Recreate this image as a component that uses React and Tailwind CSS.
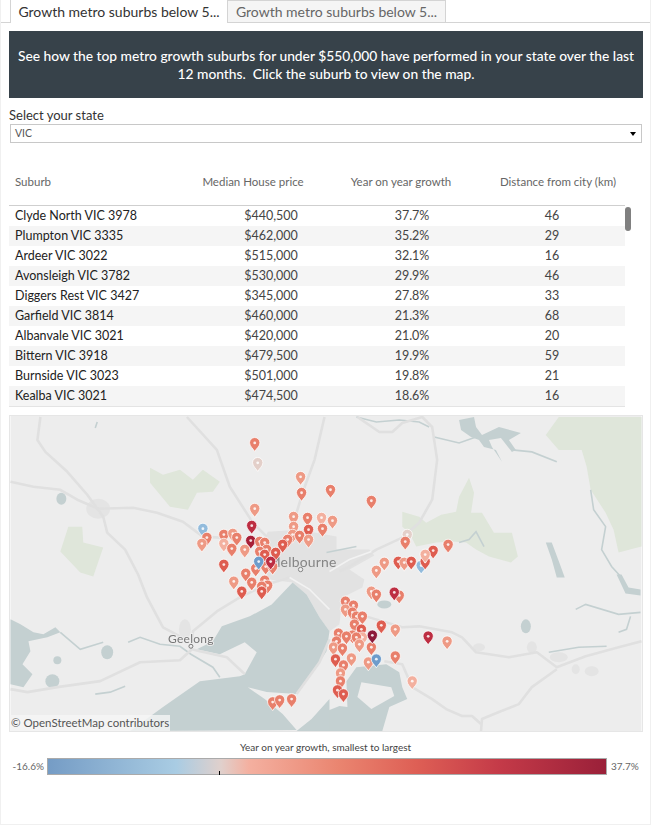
import { Fragment } from 'react'

const rows = [
  ['Clyde North VIC 3978', '$440,500', '37.7%', '46'],
  ['Plumpton VIC 3335', '$462,000', '35.2%', '29'],
  ['Ardeer VIC 3022', '$515,000', '32.1%', '16'],
  ['Avonsleigh VIC 3782', '$530,000', '29.9%', '46'],
  ['Diggers Rest VIC 3427', '$345,000', '27.8%', '33'],
  ['Garfield VIC 3814', '$460,000', '21.3%', '68'],
  ['Albanvale VIC 3021', '$420,000', '21.0%', '20'],
  ['Bittern VIC 3918', '$479,500', '19.9%', '59'],
  ['Burnside VIC 3023', '$501,000', '19.8%', '21'],
  ['Kealba VIC 3021', '$474,500', '18.6%', '16'],
]

const blue = '#6d9ccb'
const lblue = '#92bbdc'
const pale = '#e3cfc9'
const light = '#f3b09f'
const sal = '#ee9a85'
const mid = '#e87f6b'
const red = '#de5d50'
const crim = '#bd2e42'
const dark = '#a82038'
const maroon = '#8c1a3a'

const pins = [
  [255, 443, mid], [258, 463, pale], [301, 477, sal], [302, 493, mid], [331, 490, mid], [372, 501, mid],
  [255, 509, sal], [252, 526, crim], [251, 541, dark], [203, 529, lblue], [207, 538, mid], [202, 544, sal],
  [224, 535, mid], [224, 544, light], [233, 534, sal], [237, 538, mid], [232, 549, mid], [245, 550, sal],
  [294, 517, sal], [308, 518, mid], [322, 518, light], [333, 521, sal], [294, 527, sal], [309, 530, red],
  [323, 529, mid], [293, 535, sal], [300, 536, mid], [288, 540, mid], [283, 545, red], [309, 540, sal],
  [260, 542, mid], [265, 543, mid], [267, 550, mid], [260, 552, mid], [265, 555, red], [276, 553, red],
  [224, 565, red], [256, 569, mid], [266, 567, mid], [273, 567, mid], [259, 562, blue], [271, 562, crim],
  [246, 574, mid], [234, 582, sal], [252, 583, mid], [242, 592, red], [265, 581, mid], [268, 586, mid],
  [262, 587, mid], [262, 592, red], [273, 703, mid], [280, 701, mid], [292, 700, mid],
  [408, 535, pale], [406, 542, mid], [449, 545, mid], [422, 566, lblue], [426, 562, red], [434, 551, red],
  [426, 555, light], [399, 562, red], [405, 563, sal], [412, 562, red], [385, 563, sal], [377, 571, sal],
  [372, 592, sal], [377, 595, mid], [400, 596, mid], [395, 593, crim],
  [346, 602, mid], [354, 606, mid], [346, 610, sal], [353, 613, mid], [357, 617, mid], [363, 617, mid],
  [355, 625, mid], [362, 630, red], [363, 638, light], [382, 626, red], [396, 630, sal], [429, 637, crim],
  [448, 642, sal], [339, 634, mid], [353, 636, mid], [347, 637, mid], [357, 638, mid], [337, 642, mid],
  [360, 645, sal], [334, 648, sal], [343, 649, mid], [372, 648, mid], [373, 636, maroon], [336, 660, red],
  [352, 659, sal], [344, 666, mid], [369, 663, sal], [377, 660, blue], [396, 657, mid], [341, 674, sal],
  [341, 682, mid], [338, 691, red], [344, 695, red], [413, 682, light],
]

const roads = [
  '10,482 33,487 60,490 77,500 98,509 133,508 157,513 183,522 203,537 220,538',
  '40,417 37,440 45,452 67,472 87,495 103,517 107,533 125,550 138,575 147,598 163,628 180,637',
  '187,417 217,450 230,487 253,523 267,537',
  '325,417 315,460 303,493 297,513',
  '358,417 380,432 393,432 403,423 423,417 433,427 438,460 433,500 420,523 403,538 377,550 350,567 340,572',
  '10,690 27,693 57,688 100,682 140,663 180,661 192,650 200,652 227,658 245,675',
  '192,645 193,632 217,612 240,598 267,585 290,578',
  '345,610 370,618 403,628 420,627 453,633 463,638 477,653 510,658 538,653 558,668 587,657 620,648 643,642',
  '558,670 533,688 520,705 500,713 483,720 482,732',
  '385,662 403,665 413,688 433,700 447,710 463,717 473,717 482,725',
  '297,695 320,663 330,640',
]

const streams = [
  '60,633 80,650 103,643',
  '128,643 140,638 160,645 180,647 191,655 213,668 220,678',
  '95,695 110,693 125,687',
  '357,417 377,422 400,420 420,422 430,427',
  '435,437 460,443 477,437',
  '513,450 533,452 558,462',
  '592,490 595,510 607,527 603,550 613,567 623,578',
  '460,543 470,540 477,532 485,547',
  '327,553 357,547',
  '577,610 587,605 620,615 642,613',
  '632,617 628,630 620,633',
  '550,653 580,648 608,647',
  '97,422 95,428',
]

const water = [
  '293,583 307,595 320,618 330,632 327,652 320,663 297,695 267,693 248,688 265,700 283,715 297,731 130,732 163,708 200,682 240,677 245,675 257,653 245,643 220,655 197,650 213,642 222,627 250,617 272,605',
  '10,620 20,625 33,633 43,635 55,628 60,633 47,638 28,642 30,652 22,665 32,675 23,688 10,685',
  '460,420 475,417 477,427 483,435 500,427 522,433 510,440 517,450 513,452 502,438 490,440 493,447 503,462 497,450 485,447 480,440 472,437 462,430',
  '547,543 553,543 562,567 566,578 558,578 553,560',
  '618,575 623,575 630,588 642,590 642,596 627,594',
]

const greens = [
  '150,468 163,475 180,470 193,480 203,470 220,482 213,492 197,493 188,510 170,507 150,483',
  '68,527 82,527 83,543 103,548 93,577 80,573 60,552',
  '560,417 643,417 643,547 620,553 615,530 607,513 592,490 588,467 583,450 560,450 547,435',
  '403,512 420,517 427,523 442,515 457,512 460,497 470,478 475,493 472,513 483,513 495,533 513,533 519,557 512,563 490,557 477,550 467,543 453,542 437,543 417,547 410,533 403,527',
]

function Pin({ x, y, color }) {
  return (
    <Fragment>
      <path
        d={`M${x} ${y + 8.6}C${x - 1.3} ${y + 6} ${x - 5.2} ${y + 3.4} ${x - 5.2} ${y - 0.2}A5.2 5.2 0 1 1 ${x + 5.2} ${y - 0.2}C${x + 5.2} ${y + 3.4} ${x + 1.3} ${y + 6} ${x} ${y + 8.6}Z`}
        fill={color}
        stroke="#ffffff"
        strokeOpacity="0.75"
        strokeWidth="1"
      />
      <circle cx={x} cy={y} r="1.4" fill="#ffffff" fillOpacity="0.85" />
    </Fragment>
  )
}

function MelbourneMap() {
  return (
    <svg viewBox="10 416 633 316" className="block h-full w-full blur-[0.4px]">
      <rect x="10" y="416" width="633" height="316" fill="#ededed" />
      {greens.map((p) => <polygon key={p} points={p} fill="#dfe6da" />)}
      <polygon points="268,532 300,530 337,537 337,550 370,550 375,556 350,570 365,580 363,588 343,598 340,625 330,632 320,618 307,595 293,583 270,580 258,560" fill="#e2e2e2" />
      <ellipse cx="98" cy="509" rx="12" ry="10" fill="#e4e4e4" />
      <ellipse cx="480" cy="648" rx="6" ry="4" fill="#e4e4e4" />
      <ellipse cx="533" cy="648" rx="5" ry="6" fill="#e4e4e4" />
      <ellipse cx="560" cy="658" rx="9" ry="5" fill="#e4e4e4" />
      <ellipse cx="577" cy="670" rx="4" ry="5" fill="#e4e4e4" />
      <ellipse cx="593" cy="672" rx="7" ry="5" fill="#e4e4e4" />
      <ellipse cx="185" cy="630" rx="6" ry="10" fill="#e4e4e4" />
      {water.map((p) => <polygon key={p} points={p} fill="#c4d0d1" />)}
      <polygon points="312,732 320,715 340,707 348,708 347,682 357,668 387,665 400,673 403,688 408,700 390,708 383,732" fill="#c4d0d1" />
      <polygon points="362,683 392,688 395,697 372,710 358,698" fill="#ededed" />
      <polygon points="297,732 312,720 330,700 330,732" fill="#c4d0d1" />
      <ellipse cx="61" cy="499" rx="5" ry="6" fill="#c4d0d1" />
      <ellipse cx="107" cy="653" rx="6" ry="7" fill="#c4d0d1" />
      <ellipse cx="57" cy="661" rx="4" ry="4" fill="#c4d0d1" />
      <ellipse cx="52" cy="682" rx="7" ry="7" fill="#c4d0d1" />
      <ellipse cx="527" cy="627" rx="5" ry="7" fill="#c4d0d1" />
      <ellipse cx="385" cy="605" rx="7" ry="4" fill="#c4d0d1" />
      {streams.map((p) => <polyline key={p} points={p} fill="none" stroke="#c4d0d1" strokeWidth="1.6" />)}
      {roads.map((p) => <polyline key={p} points={p} fill="none" stroke="#e0e0e0" strokeWidth="2.6" strokeLinejoin="round" />)}
      <polyline points="290,578 310,590 330,610" fill="none" stroke="#f2f2f2" strokeWidth="1.5" />
      <polyline points="330,572 350,560 372,552" fill="none" stroke="#f2f2f2" strokeWidth="1.5" />
      <text x="268" y="567" fill="#858585" fontSize="14" letterSpacing="0.2" fontFamily="Lato, sans-serif">Melbourne</text>
      <circle cx="301" cy="570" r="2.2" fill="#ededed" stroke="#858585" />
      <text x="168" y="644" fill="#777777" fontSize="12" letterSpacing="0.3" fontFamily="Lato, sans-serif" stroke="#ededed" strokeWidth="2" paintOrder="stroke">Geelong</text>
      <circle cx="191" cy="647" r="2" fill="#ededed" stroke="#777777" />
      {pins.map(([x, y, color]) => <Pin key={`${x}-${y}`} x={x} y={y} color={color} />)}
    </svg>
  )
}

export default function App() {
  return (
    <div className="h-[825px] w-[651px] border-x border-b border-[#f0f0f0] bg-white font-['Lato',sans-serif] text-[#333]">
      <div className="flex h-[23px] border-b border-[#d4d4d4] pl-[9px]">
        <div className="flex h-[23px] w-[218px] items-center justify-center border-x border-[#d4d4d4] bg-white text-[14px] text-[#333]">
          Growth metro suburbs below 5...
        </div>
        <div className="flex h-[22px] w-[218px] items-center justify-center border-r border-t border-[#d4d4d4] bg-[#f5f5f5] text-[14px] text-[#666]">
          Growth metro suburbs below 5...
        </div>
      </div>

      <div className="mx-[8px] mt-[8px] flex h-[67px] w-[634px] flex-col items-center justify-center whitespace-pre bg-[#37424a] text-center text-[13.8px] font-medium leading-[18px] text-white">
        <div>See how the top metro growth suburbs for under $550,000 have performed in your state over the last</div>
        <div>12 months.  Click the suburb to view on the map.</div>
      </div>

      <div className="ml-[8px] mt-[9px] text-[13px] leading-[16px]">Select your state</div>
      <div className="ml-[9px] mt-[1px] flex h-[19px] w-[632px] items-center justify-between border border-[#c8c8c8] pl-[4px] pr-[5px] text-[10.5px] text-[#555]">
        <span>VIC</span>
        <span className="h-0 w-0 border-x-[3px] border-t-[4px] border-x-transparent border-t-black" />
      </div>

      <div className="ml-[8px] mt-[29px] h-[34px] w-[616px] border-b border-[#cfcfcf] pb-[14px]">
        <div className="grid grid-cols-[192px_104px_192px_122px] whitespace-nowrap text-[11.5px] leading-[20px] text-[#666]">
          <div className="pl-[6px]">Suburb</div>
          <div className="text-center">Median House price</div>
          <div className="text-center">Year on year growth</div>
          <div className="text-center">Distance from city (km)</div>
        </div>
      </div>

      <div className="relative ml-[8px] w-[632px]">
        <div className="absolute right-[10px] top-[1px] h-[24px] w-[6px] rounded-full bg-[#808080]" />
        {rows.map((r, i) => (
          <div
            key={r[0]}
            className={`grid h-[20px] w-[616px] grid-cols-[210px_104px_178px_102px] items-center text-[12.5px] ${i % 2 === 1 ? 'bg-[#f5f5f5]' : 'bg-white'}`}
          >
            <div className="pl-[6px] text-[#222]">{r[0]}</div>
            <div className="text-center text-[#444]">{r[1]}</div>
            <div className="text-center text-[#444]">{r[2]}</div>
            <div className="text-center text-[#444]">{r[3]}</div>
          </div>
        ))}
        <div className="h-px w-[616px] bg-[#e4e4e4]" />
      </div>

      <div className="ml-[8px] mt-[8px] w-[634px]">
        <div className="relative h-[317px] overflow-hidden border border-[#e6e6e6]">
          <MelbourneMap />
          <div className="absolute bottom-0 left-0 bg-[#f5f5f5]/80 px-[1px] text-[11.5px] leading-[16px] text-[#555]">
            © OpenStreetMap contributors
          </div>
        </div>
      </div>

      <div className="mt-[9px] text-center text-[10px] leading-[12px] text-[#444]">Year on year growth, smallest to largest</div>
      <div className="mt-[5px] flex h-[17px] items-center text-[10px] text-[#666]">
        <span className="w-[46px] pr-[3px] text-right">-16.6%</span>
        <div className="relative h-[17px] w-[560px] border border-[#aaa] bg-[linear-gradient(to_right,#759cc5_0%,#a9cce3_23%,#e0d0cc_31%,#f4b0a0_36%,#ea8570_52%,#de5f55_66%,#c43a48_81%,#9a2039_100%)]">
          <div className="absolute bottom-[-1px] left-[171px] h-[4px] w-px bg-black" />
        </div>
        <span className="pl-[4px]">37.7%</span>
      </div>
    </div>
  )
}
